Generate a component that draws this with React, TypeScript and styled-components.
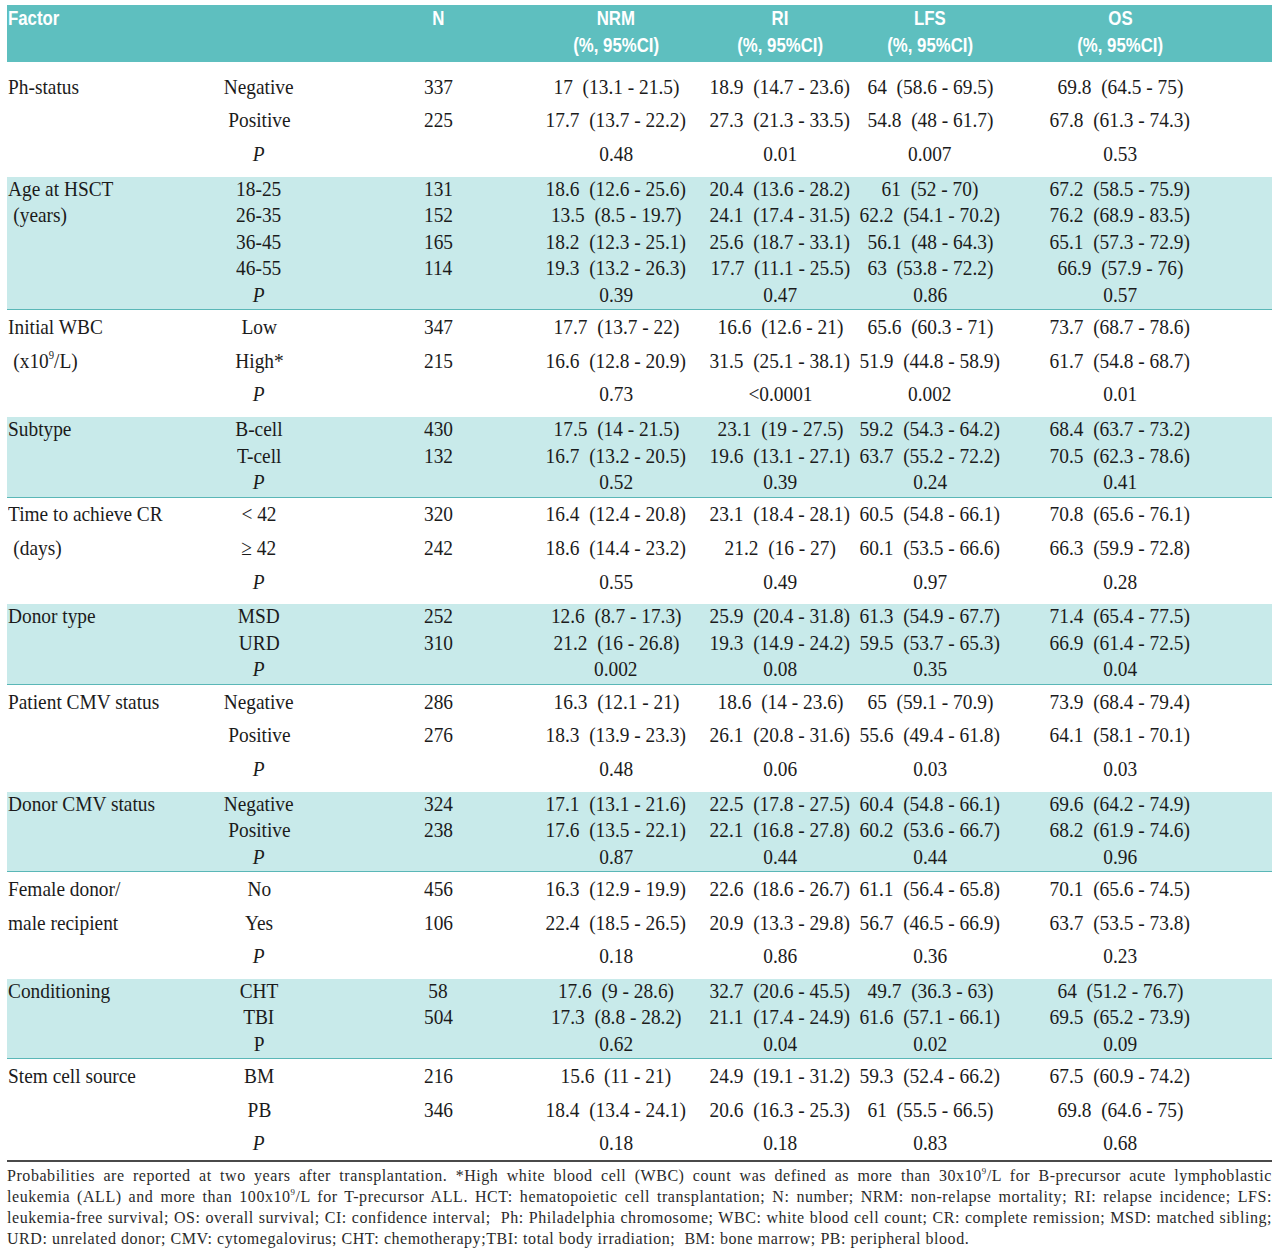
import React from 'react';
import styled, { createGlobalStyle } from 'styled-components';

const GlobalStyle = createGlobalStyle`
  body {
    margin: 0;
    background: #fff;
  }
`;

const COLUMNS = '181px 142px 216px 140px 188px 112px 268px';

const Page = styled.div`
  padding: 5px 8px 0 7px;
  color: #1b1b1b;
  font-family: 'Liberation Serif', 'Times New Roman', serif;
`;

const HeadRow = styled.div`
  display: grid;
  grid-template-columns: ${COLUMNS};
  height: 57px;
  background: #5ebfbf;
  color: #fff;
  font-family: 'Liberation Sans', Arial, sans-serif;
  font-weight: bold;
  font-size: 20px;
  line-height: 27px;
`;

const HeadCell = styled.div<{ $left?: boolean }>`
  display: flex;
  flex-direction: column;
  align-items: ${(p) => (p.$left ? 'flex-start' : 'center')};
  padding-left: ${(p) => (p.$left ? '1px' : '0')};
  min-width: 0;
`;

// the printed table uses a condensed face, so squeeze a regular one
const Squeeze = styled.span<{ $left?: boolean; $scale?: number }>`
  display: inline-block;
  white-space: nowrap;
  transform: scaleX(${(p) => p.$scale ?? 0.88});
  transform-origin: ${(p) => (p.$left ? 'left center' : 'center')};
`;

const Group = styled.div<{ $shaded?: boolean; $first?: boolean; $last?: boolean }>`
  background: ${(p) => (p.$shaded ? '#c8eaea' : 'transparent')};
  border-bottom: ${(p) => (p.$shaded ? '1px solid #5ab7b7' : 'none')};
  padding-top: ${(p) => (p.$first ? '8px' : '0')};
  padding-bottom: ${(p) => (p.$shaded || p.$last ? '0' : '6px')};
`;

const Row = styled.div<{ $tight?: boolean }>`
  display: grid;
  grid-template-columns: ${COLUMNS};
  box-sizing: border-box;
  height: ${(p) => (p.$tight ? '26.5px' : '33.6px')};
  padding-bottom: ${(p) => (p.$tight ? '3px' : '0')};
  align-items: center;
  font-size: 22px;
  line-height: 24px;
`;

const Cell = styled.div<{ $left?: boolean }>`
  display: flex;
  justify-content: ${(p) => (p.$left ? 'flex-start' : 'center')};
  padding-left: ${(p) => (p.$left ? '1px' : '0')};
  min-width: 0;
`;

const Indent = styled.span`
  padding-left: 6px;
`;

const Italic = styled.span`
  font-style: italic;
`;

const Sup = styled.sup`
  font-size: 0.55em;
  line-height: 0;
  vertical-align: 0.75em;
`;

const Rule = styled.div`
  height: 2px;
  background: #4a4a4a;
`;

const Notes = styled.div`
  padding-top: 3px;
  font-size: 16px;
  line-height: 21px;
  letter-spacing: 0.55px;
  color: #2a2a2a;
`;

const NoteLine = styled.div<{ $justify?: boolean }>`
  white-space: nowrap;
  text-align: ${(p) => (p.$justify ? 'justify' : 'left')};
  text-align-last: ${(p) => (p.$justify ? 'justify' : 'left')};
`;

type Label = React.ReactNode;
type DataRow = [Label, Label, string, string, string, string, string];

type GroupData = {
  shaded: boolean;
  rows: DataRow[];
};

const P = <Italic>P</Italic>;
const NOTE_SUP = <Sup>9</Sup>;

const groups: GroupData[] = [
  {
    shaded: false,
    rows: [
      ['Ph-status', 'Negative', '337', '17  (13.1 - 21.5)', '18.9  (14.7 - 23.6)', '64  (58.6 - 69.5)', '69.8  (64.5 - 75)'],
      ['', 'Positive', '225', '17.7  (13.7 - 22.2)', '27.3  (21.3 - 33.5)', '54.8  (48 - 61.7)', '67.8  (61.3 - 74.3)'],
      ['', P, '', '0.48', '0.01', '0.007', '0.53'],
    ],
  },
  {
    shaded: true,
    rows: [
      ['Age at HSCT', '18-25', '131', '18.6  (12.6 - 25.6)', '20.4  (13.6 - 28.2)', '61  (52 - 70)', '67.2  (58.5 - 75.9)'],
      [<Indent>(years)</Indent>, '26-35', '152', '13.5  (8.5 - 19.7)', '24.1  (17.4 - 31.5)', '62.2  (54.1 - 70.2)', '76.2  (68.9 - 83.5)'],
      ['', '36-45', '165', '18.2  (12.3 - 25.1)', '25.6  (18.7 - 33.1)', '56.1  (48 - 64.3)', '65.1  (57.3 - 72.9)'],
      ['', '46-55', '114', '19.3  (13.2 - 26.3)', '17.7  (11.1 - 25.5)', '63  (53.8 - 72.2)', '66.9  (57.9 - 76)'],
      ['', P, '', '0.39', '0.47', '0.86', '0.57'],
    ],
  },
  {
    shaded: false,
    rows: [
      ['Initial WBC', 'Low', '347', '17.7  (13.7 - 22)', '16.6  (12.6 - 21)', '65.6  (60.3 - 71)', '73.7  (68.7 - 78.6)'],
      [<Indent>(x10<Sup>9</Sup>/L)</Indent>, 'High*', '215', '16.6  (12.8 - 20.9)', '31.5  (25.1 - 38.1)', '51.9  (44.8 - 58.9)', '61.7  (54.8 - 68.7)'],
      ['', P, '', '0.73', '<0.0001', '0.002', '0.01'],
    ],
  },
  {
    shaded: true,
    rows: [
      ['Subtype', 'B-cell', '430', '17.5  (14 - 21.5)', '23.1  (19 - 27.5)', '59.2  (54.3 - 64.2)', '68.4  (63.7 - 73.2)'],
      ['', 'T-cell', '132', '16.7  (13.2 - 20.5)', '19.6  (13.1 - 27.1)', '63.7  (55.2 - 72.2)', '70.5  (62.3 - 78.6)'],
      ['', P, '', '0.52', '0.39', '0.24', '0.41'],
    ],
  },
  {
    shaded: false,
    rows: [
      ['Time to achieve CR', '< 42', '320', '16.4  (12.4 - 20.8)', '23.1  (18.4 - 28.1)', '60.5  (54.8 - 66.1)', '70.8  (65.6 - 76.1)'],
      [<Indent>(days)</Indent>, '≥ 42', '242', '18.6  (14.4 - 23.2)', '21.2  (16 - 27)', '60.1  (53.5 - 66.6)', '66.3  (59.9 - 72.8)'],
      ['', P, '', '0.55', '0.49', '0.97', '0.28'],
    ],
  },
  {
    shaded: true,
    rows: [
      ['Donor type', 'MSD', '252', '12.6  (8.7 - 17.3)', '25.9  (20.4 - 31.8)', '61.3  (54.9 - 67.7)', '71.4  (65.4 - 77.5)'],
      ['', 'URD', '310', '21.2  (16 - 26.8)', '19.3  (14.9 - 24.2)', '59.5  (53.7 - 65.3)', '66.9  (61.4 - 72.5)'],
      ['', P, '', '0.002', '0.08', '0.35', '0.04'],
    ],
  },
  {
    shaded: false,
    rows: [
      ['Patient CMV status', 'Negative', '286', '16.3  (12.1 - 21)', '18.6  (14 - 23.6)', '65  (59.1 - 70.9)', '73.9  (68.4 - 79.4)'],
      ['', 'Positive', '276', '18.3  (13.9 - 23.3)', '26.1  (20.8 - 31.6)', '55.6  (49.4 - 61.8)', '64.1  (58.1 - 70.1)'],
      ['', P, '', '0.48', '0.06', '0.03', '0.03'],
    ],
  },
  {
    shaded: true,
    rows: [
      ['Donor CMV status', 'Negative', '324', '17.1  (13.1 - 21.6)', '22.5  (17.8 - 27.5)', '60.4  (54.8 - 66.1)', '69.6  (64.2 - 74.9)'],
      ['', 'Positive', '238', '17.6  (13.5 - 22.1)', '22.1  (16.8 - 27.8)', '60.2  (53.6 - 66.7)', '68.2  (61.9 - 74.6)'],
      ['', P, '', '0.87', '0.44', '0.44', '0.96'],
    ],
  },
  {
    shaded: false,
    rows: [
      ['Female donor/', 'No', '456', '16.3  (12.9 - 19.9)', '22.6  (18.6 - 26.7)', '61.1  (56.4 - 65.8)', '70.1  (65.6 - 74.5)'],
      ['male recipient', 'Yes', '106', '22.4  (18.5 - 26.5)', '20.9  (13.3 - 29.8)', '56.7  (46.5 - 66.9)', '63.7  (53.5 - 73.8)'],
      ['', P, '', '0.18', '0.86', '0.36', '0.23'],
    ],
  },
  {
    shaded: true,
    rows: [
      ['Conditioning', 'CHT', '58', '17.6  (9 - 28.6)', '32.7  (20.6 - 45.5)', '49.7  (36.3 - 63)', '64  (51.2 - 76.7)'],
      ['', 'TBI', '504', '17.3  (8.8 - 28.2)', '21.1  (17.4 - 24.9)', '61.6  (57.1 - 66.1)', '69.5  (65.2 - 73.9)'],
      ['', 'P', '', '0.62', '0.04', '0.02', '0.09'],
    ],
  },
  {
    shaded: false,
    rows: [
      ['Stem cell source', 'BM', '216', '15.6  (11 - 21)', '24.9  (19.1 - 31.2)', '59.3  (52.4 - 66.2)', '67.5  (60.9 - 74.2)'],
      ['', 'PB', '346', '18.4  (13.4 - 24.1)', '20.6  (16.3 - 25.3)', '61  (55.5 - 66.5)', '69.8  (64.6 - 75)'],
      ['', P, '', '0.18', '0.18', '0.83', '0.68'],
    ],
  },
];

const headers = ['NRM', 'RI', 'LFS', 'OS'];

const formatValue = (value: string) => value.replace('  ', '\u00a0\u00a0');

const TableHead = () => (
  <HeadRow>
    <HeadCell $left>
      <Squeeze $left $scale={0.84}>Factor</Squeeze>
    </HeadCell>
    <HeadCell />
    <HeadCell>
      <Squeeze $scale={0.84}>N</Squeeze>
    </HeadCell>
    {headers.map((name) => (
      <HeadCell key={name}>
        <Squeeze $scale={0.84}>{name}</Squeeze>
        <Squeeze $scale={0.84}>(%, 95%CI)</Squeeze>
      </HeadCell>
    ))}
  </HeadRow>
);

const BodyRow = ({ row, tight }: { row: DataRow; tight: boolean }) => {
  const [factor, level, n, ...values] = row;

  return (
    <Row $tight={tight}>
      <Cell $left>
        <Squeeze $left>{factor}</Squeeze>
      </Cell>
      <Cell>
        <Squeeze>{level}</Squeeze>
      </Cell>
      <Cell>
        <Squeeze>{n}</Squeeze>
      </Cell>
      {values.map((value, i) => (
        <Cell key={i}>
          <Squeeze>{formatValue(value)}</Squeeze>
        </Cell>
      ))}
    </Row>
  );
};

export default function App() {
  return (
    <Page>
      <GlobalStyle />
      <TableHead />
      {groups.map((group, gi) => (
        <Group
          key={gi}
          $shaded={group.shaded}
          $first={gi === 0}
          $last={gi === groups.length - 1}
        >
          {group.rows.map((row, ri) => (
            <BodyRow key={ri} row={row} tight={group.shaded} />
          ))}
        </Group>
      ))}
      <Rule />
      <Notes>
        <NoteLine $justify>
          Probabilities are reported at two years after transplantation. *High white blood cell (WBC) count was
          defined as more than 30x10{NOTE_SUP}/L for B-precursor acute lymphoblastic
        </NoteLine>
        <NoteLine $justify>
          leukemia (ALL) and more than 100x10{NOTE_SUP}/L for T-precursor ALL. HCT: hematopoietic cell
          transplantation; N: number; NRM: non-relapse mortality; RI: relapse incidence; LFS:
        </NoteLine>
        <NoteLine $justify>
          leukemia-free survival; OS: overall survival; CI: confidence interval;&nbsp; Ph: Philadelphia chromosome;
          WBC: white blood cell count; CR: complete remission; MSD: matched sibling;
        </NoteLine>
        <NoteLine>
          URD: unrelated donor; CMV: cytomegalovirus; CHT: chemotherapy;TBI: total body irradiation;&nbsp; BM: bone
          marrow; PB: peripheral blood.
        </NoteLine>
      </Notes>
    </Page>
  );
}
